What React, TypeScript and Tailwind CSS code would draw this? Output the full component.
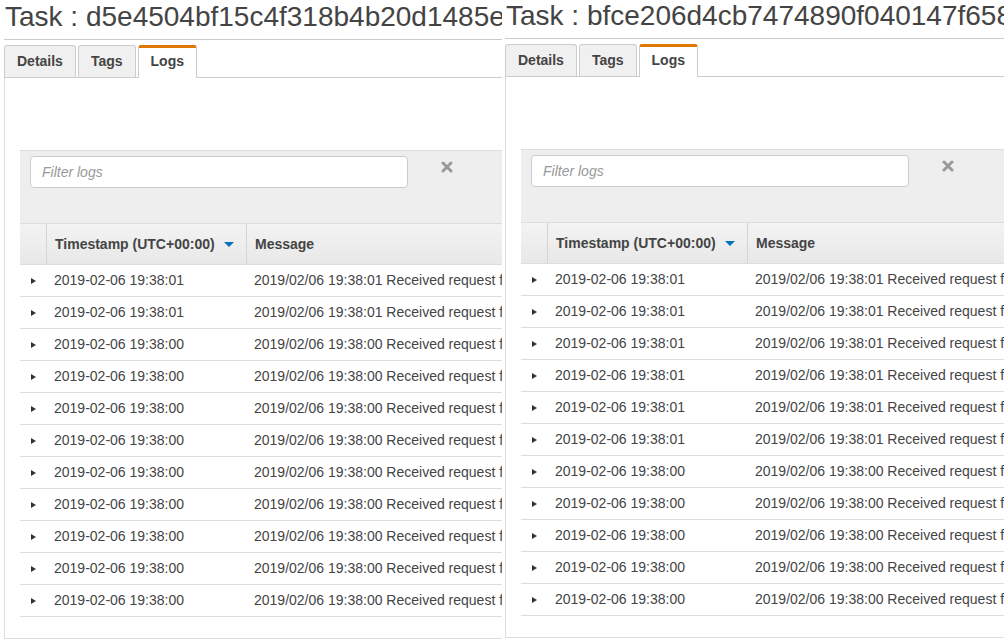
import React from "react";

type Row = { ts: string; msg: string };

function makeRows(n01: number, n00: number): Row[] {
  const rows: Row[] = [];
  for (let i = 0; i < n01; i++)
    rows.push({ ts: "2019-02-06 19:38:01", msg: "2019/02/06 19:38:01 Received request from 10.0.1.23:41874" });
  for (let i = 0; i < n00; i++)
    rows.push({ ts: "2019-02-06 19:38:00", msg: "2019/02/06 19:38:00 Received request from 10.0.1.23:41874" });
  return rows;
}

function Panel({ title, rows, wrapClass }: { title: string; rows: Row[]; wrapClass: string }) {
  return (
    <div className={wrapClass}>
      <div className="w-[720px]">
        <div className="h-[39px] border-b border-[#cccccc] pl-px text-[28px] leading-[32px] text-[#444444] whitespace-nowrap overflow-hidden">
          {title}
        </div>
        <div className="mt-[5px] flex items-end gap-[2px] h-[33px] border-b border-[#cccccc]">
          <div className="h-[32px] flex items-center px-[12px] bg-[#f0f0f0] border-t border-x border-[#cccccc] rounded-t-[3px] text-[14px] font-bold text-[#444444]">
            Details
          </div>
          <div className="h-[32px] flex items-center px-[12px] bg-[#f0f0f0] border-t border-x border-[#cccccc] rounded-t-[3px] text-[14px] font-bold text-[#444444]">
            Tags
          </div>
          <div className="h-[33px] -mb-px flex items-center pb-[3px] px-[12px] bg-white border-t-[3px] border-t-[#e07700] border-x border-x-[#cccccc] rounded-t-[3px] text-[14px] font-bold text-[#444444]">
            Logs
          </div>
        </div>
        <div className="border-l border-b border-[#dddddd] px-[15px] pt-[72px] pb-[21px]">
          <div className="h-[73px] border-t border-[#dddddd] bg-[#eeeeee] pt-[5px] pl-[10px] flex items-start">
            <input
              placeholder="Filter logs"
              className="h-[32px] w-[378px] rounded-[4px] border border-[#cccccc] bg-white px-[11px] text-[14px] text-[#444444] outline-none placeholder:italic placeholder:text-[#999999]"
            />
            <svg className="ml-[33px] mt-[5px]" width="12" height="12" viewBox="0 0 12 12">
              <path d="M2 2 L10 10 M10 2 L2 10" stroke="#999999" strokeWidth="3" strokeLinecap="round" />
            </svg>
          </div>
          <div className="flex h-[42px] border-y border-[#dddddd] bg-linear-to-b from-[#f3f3f3] to-[#e8e8e8] text-[14px] font-bold text-[#444444]">
            <div className="w-[27px] border-r border-[#d4d4d4]" />
            <div className="w-[200px] border-r border-[#d4d4d4] flex items-center pl-[8px]">
              <span className="whitespace-nowrap">Timestamp (UTC+00:00)</span>
              <span className="ml-[9px] mt-px w-0 h-0 border-x-[5px] border-x-transparent border-t-[5px] border-t-[#0073bb]" />
            </div>
            <div className="flex-1 flex items-center pl-[8px]">Message</div>
          </div>
          {rows.map((r, i) => (
            <div key={i} className="flex h-[32px] border-b border-[#dddddd] text-[14px] text-[#444444]">
              <div className="w-[26px] flex items-center justify-center">
                <span className="w-0 h-0 border-y-[3.5px] border-y-transparent border-l-[5px] border-l-[#333333]" />
              </div>
              <div className="w-[200px] flex items-center pl-[8px] whitespace-nowrap">{r.ts}</div>
              <div className="flex-1 flex items-center pl-[8px] whitespace-nowrap overflow-hidden">{r.msg}</div>
            </div>
          ))}
        </div>
      </div>
    </div>
  );
}

export default function App() {
  return (
    <div className="flex w-[1004px] h-[640px] overflow-hidden bg-white font-['Liberation_Sans',Arial,sans-serif]">
      <Panel
        title="Task : d5e4504bf15c4f318b4b20d1485e7a21"
        rows={makeRows(2, 9)}
        wrapClass="w-[502px] shrink-0 overflow-hidden pl-[4px] pt-px"
      />
      <Panel
        title="Task : bfce206d4cb7474890f040147f6583d2"
        rows={makeRows(6, 5)}
        wrapClass="flex-1 min-w-0 overflow-hidden pl-[3px]"
      />
    </div>
  );
}
